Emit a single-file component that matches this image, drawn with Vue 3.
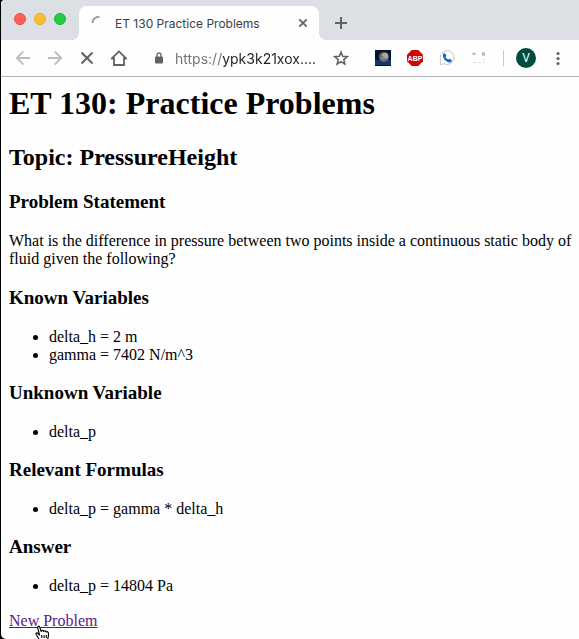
<script setup>
const sections = [
  { title: 'Known Variables', items: ['delta_h = 2 m', 'gamma = 7402 N/m^3'] },
  { title: 'Unknown Variable', items: ['delta_p'] },
  { title: 'Relevant Formulas', items: ['delta_p = gamma * delta_h'] },
  { title: 'Answer', items: ['delta_p = 14804 Pa'] },
]
</script>

<template>
  <div class="window">
    <header>
      <div class="tab-strip">
        <div class="lights">
          <button class="light red" aria-label="Close window"></button>
          <button class="light yellow" aria-label="Minimize window"></button>
          <button class="light green" aria-label="Zoom window"></button>
        </div>
        <div class="tab">
          <svg class="spinner" width="16" height="16" viewBox="0 0 16 16" fill="none" stroke="#9a9c9e" stroke-width="2"><path d="M1.500 8C1.500 4 4.500 1.800 8.500 1.800" /></svg>
          <span class="tab-title">ET 130 Practice Problems</span>
          <button class="icon tab-close" aria-label="Close tab">
            <svg width="16" height="16" viewBox="0 0 16 16" stroke="#5f6368" stroke-width="1.800"><path d="M4.300 4.300l7.400 7.400M11.700 4.300l-7.400 7.400" /></svg>
          </button>
        </div>
        <button class="icon new-tab" aria-label="New tab">
          <svg width="16" height="16" viewBox="0 0 16 16" stroke="#5f6368" stroke-width="2"><path d="M8 2v12M2 8h12" /></svg>
        </button>
      </div>
      <div class="toolbar">
        <div class="nav">
          <button class="icon" aria-label="Back">
            <svg width="16" height="16" viewBox="0 0 16 16" fill="none" stroke="#babcbe" stroke-width="1.800"><path d="M15 8H2M8.300 1.500L1.800 8l6.500 6.500" /></svg>
          </button>
          <button class="icon" aria-label="Forward">
            <svg width="16" height="16" viewBox="0 0 16 16" fill="none" stroke="#babcbe" stroke-width="1.800"><path d="M1 8h13M7.700 1.500L14.200 8l-6.500 6.500" /></svg>
          </button>
          <button class="icon" aria-label="Stop">
            <svg width="16" height="16" viewBox="0 0 16 16" stroke="#5f6368" stroke-width="2"><path d="M2.500 2.500l11 11M13.500 2.500l-11 11" /></svg>
          </button>
          <button class="icon" aria-label="Home">
            <svg width="16" height="16" viewBox="0 0 16 16" fill="none" stroke="#5f6368" stroke-width="1.800"><path d="M.7 8.500L8 1.400l7.300 7.100H13V15H3V8.500Z" /></svg>
          </button>
        </div>
        <div class="address">
          <svg class="lock" width="8" height="12" viewBox="0 0 8 12"><path d="M2 5V3a2 2 0 0 1 4 0v2" fill="none" stroke="#5f6368" stroke-width="1.300" /><rect y="4.500" width="8" height="7" rx="1" fill="#5f6368" /></svg>
          <input class="url" type="text" aria-label="Address" value="https://ypk3k21xox...." />
          <button class="icon" aria-label="Bookmark this page">
            <svg width="16" height="16" viewBox="0 0 16 16" fill="none" stroke="#5f6368" stroke-width="1.500"><path d="M8 2l1.700 4.200 4.600.4-3.500 3 1.100 4.500L8 11.700l-3.900 2.400 1.100-4.500-3.500-3 4.600-.4Z" /></svg>
          </button>
        </div>
        <div class="extensions">
          <button class="icon" aria-label="Moon extension">
            <svg width="16" height="16" viewBox="0 0 16 16"><rect width="16" height="16" fill="#071630" /><path d="M0 10h16v5H0Z" fill="#153766" /><path d="M0 15h16v1H0Z" fill="#07101c" /><circle cx="9" cy="7" r="5" fill="#696969" /><circle cx="10" cy="6" r="3" fill="#aaa" /><circle cx="8" cy="8" r="2" fill="#858585" /></svg>
          </button>
          <button class="icon" aria-label="Ad blocker">
            <svg width="16" height="16" viewBox="0 0 16 16"><path d="M4.700 0h6.600L16 4.700v6.600L11.300 16H4.700L0 11.300V4.700Z" fill="#cb0808" /><text x="8" y="11" text-anchor="middle" class="abp">ABP</text></svg>
          </button>
          <button class="icon" aria-label="Call extension">
            <svg width="16" height="16" viewBox="0 0 16 16"><path d="M1 14.500l.9-4A6.900 6.900 0 1 1 5 13.700Z" fill="#fff" stroke="#bfc1c3" /><path d="M5.300 3L7.500 5.300 6.600 7c.5 1.200 1.400 2 2.600 2.600l1.500-1 2.300 2.200c-.8 1.700-2.200 2-3.800 1.400C6.500 11.200 4.600 9 4 6.500 3.700 5 4 3.600 5.300 3Z" fill="#1264d3" /></svg>
          </button>
          <button class="icon" aria-label="Disabled extension">
            <svg width="16" height="16" viewBox="0 0 16 16"><path d="M1 3.500h4M2 4.500h2" stroke="#b5b5b5" /><rect x="11" y="2" width="3" height="4" fill="#ccc" /><path d="M11 4h3" stroke="#aaa" /><path d="M2 12.500h3M7 12.500h3M12 12.500h2M12.500 9v2" stroke="#dfdfdf" /></svg>
          </button>
        </div>
        <span class="divider"></span>
        <button class="avatar" aria-label="Profile V">V</button>
        <button class="icon menu" aria-label="Browser menu">
          <svg width="4" height="16" viewBox="0 0 4 16" fill="#5f6368"><circle cx="2" cy="3.500" r="1.600" /><circle cx="2" cy="8.500" r="1.600" /><circle cx="2" cy="13.500" r="1.600" /></svg>
        </button>
      </div>
    </header>
    <main>
      <h1>ET 130: Practice Problems</h1>
      <h2>Topic: PressureHeight</h2>
      <h3>Problem Statement</h3>
      <p>What is the difference in pressure between two points inside a continuous static body of fluid given the following?</p>
      <section v-for="s in sections" :key="s.title">
        <h3>{{ s.title }}</h3>
        <ul>
          <li v-for="item in s.items" :key="item">{{ item }}</li>
        </ul>
      </section>
      <div class="action">
        <a href="#">New Problem</a>
        <svg class="pointer" width="15" height="16" viewBox="0 0 15 16" fill="#fff" stroke="#000" stroke-width="1.100" stroke-linejoin="round"><path d="M4.500 15L1.200 9.500C.5 8 1.800 7.300 3 8.500L4.500 10 2.700 3C2.300 1 4.200.5 4.800 2.300L6.200 6.500C6.500 5 8.300 5 8.700 6.500 9.300 5.400 10.700 5.700 11 7c.9-.8 2.200-.2 2.400 1.200.3 2-.1 4.500-1.200 6.800Z" /><path d="M6.500 10l.5 3M9 10l.2 3M11.300 10v3" /></svg>
      </div>
    </main>
  </div>
</template>

<style>
body {
  margin: 0;
  background: #000;
}
</style>

<style scoped>
.window {
  box-sizing: border-box;
  min-height: 100vh;
  margin-left: 1px;
  overflow: hidden;
  border-radius: 4px 0 0 5px;
  background: #fefefe;
}
button {
  padding: 0;
  border: 0;
  background: none;
}
.icon {
  display: flex;
  flex: none;
  align-items: center;
  justify-content: center;
}
.tab-strip {
  display: flex;
  align-items: center;
  height: 40px;
  background: #dce0e4;
}
.lights {
  display: flex;
  flex: none;
  gap: 8px;
  margin: 0 13px 2px 13px;
}
.light {
  box-sizing: border-box;
  width: 12px;
  height: 12px;
  border: 1px solid;
  border-radius: 50%;
}
.red { background: #ff6058; border-color: #e94b43; }
.yellow { background: #ffbd2e; border-color: #e5a526; }
.green { background: #28ca42; border-color: #20af34; }
.tab {
  position: relative;
  box-sizing: border-box;
  display: flex;
  flex: 0 1 240px;
  align-items: center;
  align-self: flex-end;
  height: 34px;
  padding: 0 8px 0 12px;
  border-radius: 8px 8px 0 0;
  background: #fefefe;
}
.tab::before,
.tab::after {
  content: '';
  position: absolute;
  bottom: 0;
  width: 8px;
  height: 8px;
}
.tab::before {
  right: 100%;
  background: radial-gradient(circle at 0 0, transparent 8px, #fefefe 8px);
}
.tab::after {
  left: 100%;
  background: radial-gradient(circle at 100% 0, transparent 8px, #fefefe 8px);
}
.spinner {
  flex: none;
  margin-right: 8px;
}
.tab-title {
  flex: 1;
  overflow: hidden;
  color: #3c4043;
  font: 12px Inter, sans-serif;
  white-space: nowrap;
}
.new-tab {
  margin: 6px 0 0 14px;
}
.toolbar {
  display: flex;
  align-items: center;
  height: 36px;
  border-bottom: 1px solid #b4b6b5;
}
.nav {
  display: flex;
  flex: none;
  gap: 16px;
  padding-left: 14px;
}
.address {
  display: flex;
  flex: 1;
  align-items: center;
  min-width: 0;
  padding: 0 26px 0 28px;
}
.lock {
  flex: none;
}
.url {
  flex: 1;
  min-width: 0;
  margin: 0 8px 0 12px;
  padding: 0;
  border: 0;
  outline: 0;
  background: linear-gradient(90deg, #6e7276 47px, #202124 47px);
  background-clip: text;
  color: transparent;
  font: 14px Inter, sans-serif;
}
.extensions {
  display: flex;
  flex: none;
  gap: 16px;
}
.divider {
  flex: none;
  width: 1px;
  height: 16px;
  margin: 0 12px 0 16px;
  background: #c8cacc;
}
.avatar {
  flex: none;
  width: 20px;
  height: 20px;
  border-radius: 50%;
  background: #004d40;
  color: #fff;
  font: 12px Roboto, sans-serif;
}
.abp {
  fill: #fff;
  font: bold 7px "Liberation Sans", sans-serif;
}
.menu {
  margin: 0 19px 0 20px;
}
main {
  padding: 8px 6px 8px 8px;
  color: #000;
  font: 16px/18px "Liberation Serif", serif;
}
h1 {
  margin: 0 0 22px;
  font-size: 32px;
  line-height: 36px;
}
h2 {
  margin: 0 0 20px;
  font-size: 24px;
  line-height: 28px;
}
h3 {
  margin: 18px 0 19px;
  font-size: 19px;
  line-height: 22px;
}
p {
  margin: 19px 0;
}
ul {
  margin: 0;
  padding-left: 40px;
}
.action {
  position: relative;
  margin-top: 17px;
}
a {
  color: #551a8b;
}
.pointer {
  position: absolute;
  top: 13px;
  left: 26px;
}
</style>
